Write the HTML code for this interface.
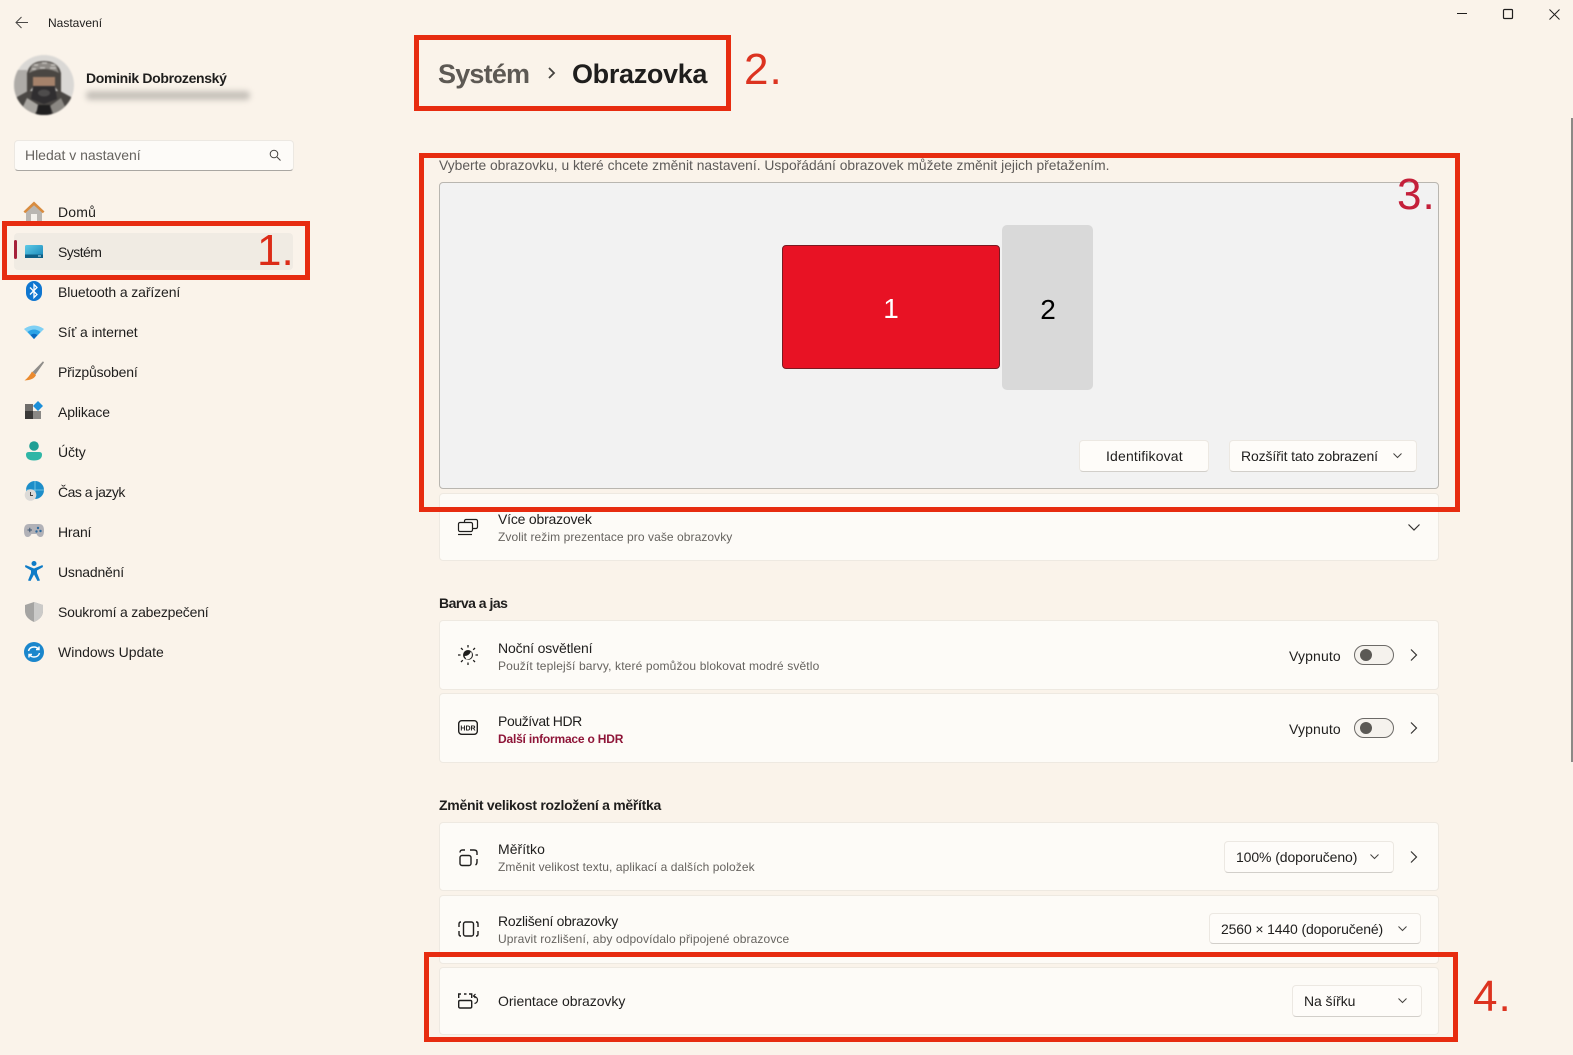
<!DOCTYPE html>
<html lang="cs"><head><meta charset="utf-8"><title>Nastavení</title>
<style>
html,body{margin:0;padding:0}
body{width:1573px;height:1055px;overflow:hidden;position:relative;background:#faf3ea;font-family:"Liberation Sans",sans-serif;color:#1f1e1d}
.t{position:absolute;white-space:nowrap;transform:translateY(-50%);font-size:14px;line-height:18px}
.s{font-size:12px;color:#66635f}
.b{font-weight:bold}
.card{position:absolute;left:439px;width:998px;background:#fdfbf7;border:1px solid #eee9e1;border-radius:4px;box-sizing:content-box}
.btn{position:absolute;background:#fefcf9;border:1px solid #ece8e2;border-bottom-color:#d2cfca;border-radius:4px;box-sizing:border-box}
.rb{position:absolute;border:5px solid #e72c10;box-sizing:border-box}
.ann{position:absolute;font-size:44px;line-height:44px;white-space:nowrap;letter-spacing:1px}
.tog{position:absolute;width:40px;height:20px;box-sizing:border-box;border:1px solid #6c6a67;border-radius:10px;background:#f5f2ed}
.tog i{position:absolute;left:5px;top:3px;width:12px;height:12px;border-radius:50%;background:#5b5955}
svg{position:absolute;overflow:visible}
.mi{fill:none;stroke:#1f1e1d;stroke-width:1.2}
.ch{fill:none;stroke:#44423f;stroke-width:1}
.cr{fill:none;stroke:#33312f;stroke-width:1.2}
</style></head><body>

<!-- title bar -->
<svg style="left:15px;top:16px" width="14" height="14"><path d="M1 6.5H13M6.5 1L1 6.5L6.5 12" fill="none" stroke="#4a4846" stroke-width="1"/></svg>
<div class="t" style="left:48px;top:23px;font-size:12px">Nastavení</div>
<svg style="left:1457px;top:8px" width="110" height="14"><path d="M0 5.5H10" stroke="#1f1e1d" fill="none"/><rect x="46.500" y="1.500" width="9" height="9" rx="1" fill="none" stroke="#1f1e1d" stroke-width="1.200"/><path d="M92.500 1.500L102.500 11.500M102.500 1.500L92.500 11.500" stroke="#1f1e1d" fill="none"/></svg>
<div style="position:absolute;left:1571px;top:118px;width:2px;height:644px;background:#8b8986"></div>

<!-- profile -->
<svg style="left:14px;top:55px;filter:blur(.8px)" width="60" height="60" viewBox="0 0 60 60">
<defs><clipPath id="av"><circle cx="30" cy="30" r="30"/></clipPath></defs>
<g clip-path="url(#av)"><rect width="60" height="60" fill="#dad8d5"/>
<rect x="0" y="15" width="13" height="30" fill="#aeaba7"/>
<path d="M0 60L3 42L14 36H46L57 42L60 60Z" fill="#4a4744"/>
<path d="M13 40L13 18Q16 6 30 6Q44 6 47 18L47 40L41 32V24H19V32Z" fill="#4a4642"/>
<path d="M15 18Q30 10 45 18L42 10Q30 4 18 10Z" fill="#8e8a85"/>
<path d="M20 10H24M28 8H33M37 10H41M18 14H22M26 13H31M36 13H42" stroke="#c9c6c2" stroke-width="1.500"/>
<rect x="19" y="22" width="22" height="10" fill="#a5826b"/>
<path d="M19 31H41L43 44L30 49L17 44Z" fill="#302e30"/>
<ellipse cx="30" cy="38" rx="6" ry="3.500" fill="#4e4c4c"/>
<path d="M5 60L13 43L26 51L20 60Z" fill="#a8a5a0"/><path d="M55 60L47 43L36 51L40 60Z" fill="#8b8883"/>
<path d="M24 50H36L38 60H22Z" fill="#201f20"/></g></svg>
<div class="t b" style="left:86px;top:78px;letter-spacing:-.34px">Dominik Dobrozenský</div>
<div style="position:absolute;left:86px;top:91px;width:164px;height:9px;background:#c6c1ba;filter:blur(3px);border-radius:4px"></div>

<!-- search -->
<div class="btn" style="left:14px;top:140px;width:280px;height:31px;border-bottom-color:#a9a6a2;background:#fdfbf8"></div>
<div class="t" style="left:25px;top:155px;color:#66635f;letter-spacing:-.02px">Hledat v nastavení</div>
<svg style="left:269px;top:149px" width="13" height="13"><circle cx="5" cy="5" r="3.800" fill="none" stroke="#44423f" stroke-width="1"/><path d="M8 8L11.500 11.500" stroke="#44423f" stroke-width="1"/></svg>

<!-- nav -->
<div style="position:absolute;left:14px;top:233px;width:279px;height:37px;background:#f0ebe3;border-radius:4px"></div>
<div style="position:absolute;left:14px;top:240px;width:3px;height:19px;background:#a5213a;border-radius:2px"></div>
<div class="t" style="left:58px;top:212px;letter-spacing:.2px">Domů</div>
<div class="t" style="left:58px;top:252px;letter-spacing:-.55px">Systém</div>
<div class="t" style="left:58px;top:292px;letter-spacing:-.12px">Bluetooth a zařízení</div>
<div class="t" style="left:58px;top:332px;letter-spacing:-.08px">Síť a internet</div>
<div class="t" style="left:58px;top:372px;letter-spacing:-.18px">Přizpůsobení</div>
<div class="t" style="left:58px;top:412px;letter-spacing:-.12px">Aplikace</div>
<div class="t" style="left:58px;top:452px;letter-spacing:-.1px">Účty</div>
<div class="t" style="left:58px;top:492px;letter-spacing:-.5px">Čas a jazyk</div>
<div class="t" style="left:58px;top:532px;letter-spacing:-.2px">Hraní</div>
<div class="t" style="left:58px;top:572px;letter-spacing:-.2px">Usnadnění</div>
<div class="t" style="left:58px;top:612px;letter-spacing:-.2px">Soukromí a zabezpečení</div>
<div class="t" style="left:58px;top:652px">Windows Update</div>

<!-- nav icons -->
<svg style="left:23px;top:201px" width="22" height="20"><path d="M3 9L11 2L19 9V20H3Z" fill="#b9b6b2"/><path d="M0.500 10.500L11 .5L21.500 10.500L19.800 12.300L11 4.200L2.200 12.300Z" fill="#d98c3f"/><rect x="8" y="13" width="6" height="7" fill="#f4f1ec"/></svg>
<svg style="left:25px;top:245px" width="18" height="14"><defs><linearGradient id="sg" x1="0" y1="0" x2="1" y2="1"><stop offset="0" stop-color="#5fcbe6"/><stop offset="1" stop-color="#1484b8"/></linearGradient></defs><rect width="18" height="13" rx="1.500" fill="url(#sg)"/><rect y="9.500" width="18" height="3.500" fill="#0e5f86"/><rect x="13" y="10.500" width="3" height="1" fill="#bfe4f2"/></svg>
<svg style="left:26px;top:281px" width="16" height="20"><rect width="16" height="20" rx="8" fill="#0f76d0"/><path d="M4 6.500L11 13.500L8 16.500V3.500L11 6.500L4 13.500" fill="none" stroke="#fff" stroke-width="1.300"/></svg>
<svg style="left:24px;top:325px" width="20" height="14"><path d="M0 4Q10 -3 20 4L10 14Z" fill="#7fd0f4"/><path d="M3.500 7Q10 2 16.500 7L10 14Z" fill="#2ba3e6"/><path d="M6.500 10Q10 7.500 13.500 10L10 14Z" fill="#0c6bc0"/></svg>
<svg style="left:24px;top:361px" width="20" height="20"><path d="M19 .2L20 1.500L11.500 13.500L8.500 11Z" fill="#8f8d8a"/><path d="M8 10.500L12 14Q10 19 .5 19.500Q5 16 8 10.500Z" fill="#ea8a2f"/></svg>
<svg style="left:25px;top:401px" width="18" height="18"><rect y="3" width="8" height="8" fill="#6f6d6b"/><rect y="10" width="8" height="8" fill="#3a3938"/><rect x="8" y="10" width="8" height="8" fill="#8a8885"/><path d="M13 0L18 5L13 10L8 5Z" fill="#1c8fd9"/></svg>
<svg style="left:26px;top:441px" width="16" height="20"><circle cx="8" cy="5" r="4.800" fill="#1f9f94"/><path d="M0 13.500Q0 11 3 11H13Q16 11 16 13.500Q16 19.500 8 19.500Q0 19.500 0 13.500Z" fill="#2fb6a6"/></svg>
<svg style="left:24px;top:481px" width="20" height="20"><circle cx="11" cy="9" r="9" fill="#1d8ec9"/><path d="M11 0V18M2 9H20" stroke="#7fcdea" stroke-width=".8"/><circle cx="6.500" cy="14" r="5.800" fill="#dcdad7"/><path d="M6.500 11V14.500H9" fill="none" stroke="#44423f" stroke-width="1"/></svg>
<svg style="left:24px;top:523px" width="20" height="15"><path d="M5 1H15Q20 1 20 7.500Q20 14 16.500 14Q14 14 12.500 11H7.500Q6 14 3.500 14Q0 14 0 7.500Q0 1 5 1Z" fill="#b1b1b7"/><path d="M3.500 7H8M5.800 4.800V9.200" stroke="#3e5670" stroke-width="1"/><circle cx="14" cy="5" r="1.200" fill="#2e6a9e"/><circle cx="16.500" cy="8" r="1.200" fill="#2e6a9e"/><circle cx="12.500" cy="8.500" r="1.200" fill="#2e6a9e"/></svg>
<svg style="left:25px;top:561px" width="18" height="20"><circle cx="9" cy="2.500" r="2.500" fill="#0f7cc7"/><path d="M0.500 4L9 7.500L17.500 4L18 6L12 9.500V12L15 19.500L12.500 20L9 13.500L5.500 20L3 19.500L6 12V9.500L0 6Z" fill="#0f7cc7"/></svg>
<svg style="left:25px;top:602px" width="18" height="20"><path d="M9 0L18 3V9Q18 16 9 20Q0 16 0 9V3Z" fill="#a5a4a2"/><path d="M9 0L18 3V9Q18 16 9 20Z" fill="#cbcac8"/></svg>
<svg style="left:24px;top:642px" width="20" height="20"><circle cx="10" cy="10" r="10" fill="#1a86cc"/><path d="M4.500 9Q5.500 5 10 5Q13 5 15 7.500M15 4.500V7.500H12M15.500 11Q14.500 15 10 15Q7 15 5 12.500M5 15.500V12.500H8" fill="none" stroke="#fff" stroke-width="1.400"/></svg>

<!-- header -->
<div class="t b" style="left:438px;top:74px;font-size:27px;line-height:36px;color:#5d5954;letter-spacing:-.8px">Systém</div>
<svg style="left:548px;top:67px" width="8" height="12"><path d="M1 1L6 6L1 11" fill="none" stroke="#44423f" stroke-width="1.800"/></svg>
<div class="t b" style="left:572px;top:74px;font-size:27px;line-height:36px;color:#1f1e1d;letter-spacing:-.33px">Obrazovka</div>

<!-- displays -->
<div class="t" style="left:439px;top:165px;color:#5d5a58;font-size:13.830px">Vyberte obrazovku, u které chcete změnit nastavení. Uspořádání obrazovek můžete změnit jejich přetažením.</div>
<div style="position:absolute;left:439px;top:182px;width:1000px;height:307px;box-sizing:border-box;background:#f2f2f2;border:1px solid #b9b6b0;border-radius:4px"></div>
<div style="position:absolute;left:782px;top:245px;width:218px;height:124px;box-sizing:border-box;background:#e81224;border:1px solid #7b1a22;border-radius:4px;color:#fff;font-size:28px;line-height:125px;text-align:center">1</div>
<div style="position:absolute;left:1002px;top:225px;width:91px;height:165px;background:#d9d9d9;border-radius:5px;color:#000;font-size:28px;line-height:169px;text-align:center;text-indent:1px">2</div>
<div class="btn" style="left:1079px;top:440px;width:130px;height:32px"></div>
<div class="t" style="left:1106px;top:456px;letter-spacing:.16px">Identifikovat</div>
<div class="btn" style="left:1229px;top:440px;width:188px;height:32px"></div>
<div class="t" style="left:1241px;top:456px;letter-spacing:-.14px">Rozšířit tato zobrazení</div>
<svg style="left:1393px;top:453px" width="9" height="6"><path class="ch" d="M.5 .5L4.500 4.500L8.500 .5"/></svg>

<!-- cards -->
<div class="card" style="top:493px;height:66px"></div>
<svg style="left:458px;top:519px" width="20" height="17"><rect x="6.500" y=".5" width="13" height="9" rx="1.500" class="mi"/><rect x=".5" y="3.500" width="14" height="9" rx="1.500" class="mi" style="fill:#fdfbf7"/><path d="M0 15.500H14" class="mi"/></svg>
<div class="t" style="left:498px;top:519px;letter-spacing:-.2px">Více obrazovek</div>
<div class="t s" style="left:498px;top:537px;letter-spacing:.07px">Zvolit režim prezentace pro vaše obrazovky</div>
<svg style="left:1408px;top:524px" width="12" height="8"><path class="cr" d="M.5 .5L6 6L11.500 .5"/></svg>

<div class="t b" style="left:439px;top:603px;letter-spacing:-.5px">Barva a jas</div>

<div class="card" style="top:620px;height:68px"></div>
<svg style="left:458px;top:645px" width="20" height="20"><circle cx="10" cy="10" r="5" fill="#1f1e1d"/><path d="M6.500 11Q11 11 13 6.500Q14.500 9 13.500 12Q11.500 14.800 8.500 14.500Z" fill="#fdfbf7"/><path d="M10 0V2.500M10 17.500V20M0 10H2.500M17.500 10H20M3 3L4.800 4.800M15.200 15.200L17 17M3 17L4.800 15.200M15.200 4.800L17 3" stroke="#1f1e1d" stroke-width="1.300" fill="none"/></svg>
<div class="t" style="left:498px;top:648px;letter-spacing:-.14px">Noční osvětlení</div>
<div class="t s" style="left:498px;top:666px;letter-spacing:.14px">Použít teplejší barvy, které pomůžou blokovat modré světlo</div>
<div class="t" style="left:1289px;top:656px;letter-spacing:.14px">Vypnuto</div>
<div class="tog" style="left:1354px;top:645px"><i></i></div>
<svg style="left:1410px;top:649px" width="8" height="12"><path class="cr" d="M1 .5L6.500 6L1 11.500"/></svg>

<div class="card" style="top:693px;height:68px"></div>
<svg style="left:458px;top:720px" width="20" height="15"><rect x=".7" y=".7" width="18.600" height="13.600" rx="3" fill="none" stroke="#1f1e1d" stroke-width="1.400"/><text x="10" y="10.300" text-anchor="middle" font-family="Liberation Sans" font-weight="bold" font-size="7" fill="#1f1e1d">HDR</text></svg>
<div class="t" style="left:498px;top:721px;letter-spacing:-.4px">Používat HDR</div>
<div class="t b" style="left:498px;top:739px;font-size:12px;color:#8e1538;letter-spacing:-.2px">Další informace o HDR</div>
<div class="t" style="left:1289px;top:729px;letter-spacing:.14px">Vypnuto</div>
<div class="tog" style="left:1354px;top:718px"><i></i></div>
<svg style="left:1410px;top:722px" width="8" height="12"><path class="cr" d="M1 .5L6.500 6L1 11.500"/></svg>

<div class="t b" style="left:439px;top:805px;letter-spacing:-.28px">Změnit velikost rozložení a měřítka</div>

<div class="card" style="top:822px;height:67px"></div>
<svg style="left:459px;top:849px" width="19" height="18"><rect x="1" y="6.500" width="11" height="10" rx="2" class="mi" style="stroke-width:1.400"/><path d="M1 3.500Q1 1 3.500 1H6M11 1H15Q18 1 18 3.500V6M18 10V13Q18 15 16.500 16" class="mi" style="stroke-width:1.400"/></svg>
<div class="t" style="left:498px;top:849px;letter-spacing:.03px">Měřítko</div>
<div class="t s" style="left:498px;top:867px;letter-spacing:.08px">Změnit velikost textu, aplikací a dalších položek</div>
<div class="btn" style="left:1224px;top:841px;width:170px;height:32px"></div>
<div class="t" style="left:1236px;top:857px;letter-spacing:-.1px">100% (doporučeno)</div>
<svg style="left:1370px;top:854px" width="9" height="6"><path class="ch" d="M.5 .5L4.500 4.500L8.500 .5"/></svg>
<svg style="left:1410px;top:851px" width="8" height="12"><path class="cr" d="M1 .5L6.500 6L1 11.500"/></svg>

<div class="card" style="top:895px;height:67px"></div>
<svg style="left:458px;top:921px" width="21" height="16"><rect x="5.500" y="1" width="10" height="14" rx="2" class="mi" style="stroke-width:1.400"/><path d="M3 1H2.500Q1 1 1 3V6M1 10V13Q1 15 2.500 15H3M18 1H18.500Q20 1 20 3V6M20 10V13Q20 15 18.500 15H18" class="mi" style="stroke-width:1.400"/></svg>
<div class="t" style="left:498px;top:921px;letter-spacing:-.28px">Rozlišení obrazovky</div>
<div class="t s" style="left:498px;top:939px;letter-spacing:.11px">Upravit rozlišení, aby odpovídalo připojené obrazovce</div>
<div class="btn" style="left:1209px;top:913px;width:212px;height:31px"></div>
<div class="t" style="left:1221px;top:929px;letter-spacing:-.14px">2560 × 1440 (doporučené)</div>
<svg style="left:1398px;top:926px" width="9" height="6"><path class="ch" d="M.5 .5L4.500 4.500L8.500 .5"/></svg>

<div class="card" style="top:967px;height:66px"></div>
<svg style="left:458px;top:993px" width="21" height="16"><rect x=".7" y="7.500" width="13" height="7.500" rx="1.200" class="mi" style="stroke-width:1.400"/><path d="M.7 5V1H3M6 1H8.500M11 1H13.700V5" class="mi" style="stroke-width:1.400"/><path d="M16 3Q20 4.500 19.500 7.500Q19 10 16.500 10.500M17.500 1L15.500 3L17.500 5" class="mi" style="stroke-width:1.200"/></svg>
<div class="t" style="left:498px;top:1001px;letter-spacing:-.06px">Orientace obrazovky</div>
<div class="btn" style="left:1292px;top:985px;width:130px;height:32px"></div>
<div class="t" style="left:1304px;top:1001px;letter-spacing:-.1px">Na šířku</div>
<svg style="left:1398px;top:998px" width="9" height="6"><path class="ch" d="M.5 .5L4.500 4.500L8.500 .5"/></svg>

<!-- annotations -->
<div class="rb" style="left:2px;top:221px;width:308px;height:59px"></div>
<div class="rb" style="left:414px;top:35px;width:317px;height:76px"></div>
<div class="rb" style="left:419px;top:153px;width:1041px;height:359px"></div>
<div class="rb" style="left:424px;top:952px;width:1034px;height:90px"></div>
<div class="ann" style="left:257px;top:229px;color:#dc2c18;letter-spacing:0">1.</div>
<div class="ann" style="left:744px;top:48px;color:#dc3320">2.</div>
<div class="ann" style="left:1397px;top:173px;color:#c4203a">3.</div>
<div class="ann" style="left:1473px;top:975px;color:#dc3320">4.</div>
</body></html>
